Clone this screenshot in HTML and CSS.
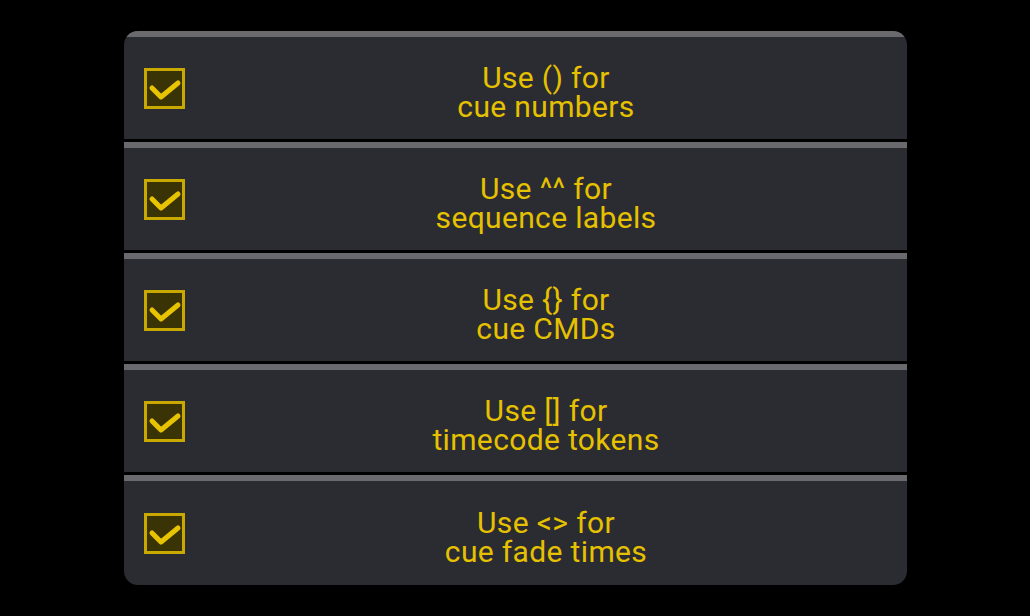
FILE: index.html
```html
<!DOCTYPE html>
<html lang="en">
<head>
    <meta charset="UTF-8">
    <meta name="viewport" content="width=device-width, initial-scale=1.0">
    <title>Bracket Options</title>
    <link rel="stylesheet" href="styles.css">
</head>
<body>
    <div class="panel">
        <div class="option">
            <span class="check"><svg viewBox="0 0 41 41" width="41" height="41"><path d="M8 20 L17 29 L34 15"/></svg></span>
            <div class="label">Use () for<br>cue numbers</div>
        </div>
        <div class="option">
            <span class="check"><svg viewBox="0 0 41 41" width="41" height="41"><path d="M8 20 L17 29 L34 15"/></svg></span>
            <div class="label">Use ^^ for<br>sequence labels</div>
        </div>
        <div class="option">
            <span class="check"><svg viewBox="0 0 41 41" width="41" height="41"><path d="M8 20 L17 29 L34 15"/></svg></span>
            <div class="label">Use {} for<br>cue CMDs</div>
        </div>
        <div class="option">
            <span class="check"><svg viewBox="0 0 41 41" width="41" height="41"><path d="M8 20 L17 29 L34 15"/></svg></span>
            <div class="label">Use [] for<br>timecode tokens</div>
        </div>
        <div class="option last">
            <span class="check"><svg viewBox="0 0 41 41" width="41" height="41"><path d="M8 20 L17 29 L34 15"/></svg></span>
            <div class="label">Use &lt;&gt; for<br>cue fade times</div>
        </div>
    </div>
</body>
</html>
```

FILE: styles.css
```css
body {
    margin: 0;
    background: #000;
    font-family: Roboto, "Noto Sans", sans-serif;
}
.panel {
    width: 783px;
    margin: 31px 0 0 124px;
    border-radius: 14px;
    overflow: hidden;
    background: #000;
}
.option {
    display: flex;
    align-items: center;
    height: 102px;
    padding-left: 20px;
    background: #2b2c31;
    border-top: 6px solid #6a6a6e;
    margin-bottom: 3px;
}
.option.last {
    height: 104px;
    margin-bottom: 0;
}
.check {
    width: 41px;
    height: 41px;
    flex: none;
    box-sizing: border-box;
    border: 3px solid #c9a800;
    background: #3a3306;
    display: flex;
}
.check svg {
    margin: -3px;
}
.check path {
    fill: none;
    stroke: #e8c300;
    stroke-width: 5;
    stroke-linecap: round;
    stroke-linejoin: round;
}
.label {
    flex: 1;
    text-align: center;
    color: #e6c100;
    font-size: 30px;
    line-height: 29px;
    letter-spacing: 0.35px;
    padding-top: 8px;
}
```
